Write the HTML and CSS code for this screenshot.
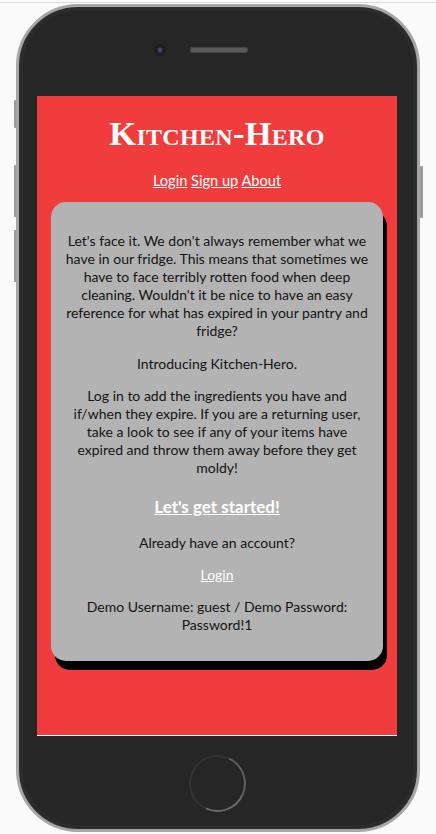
FILE: index.html
```html
<!DOCTYPE html>
<html lang="en">
<head>
<meta charset="utf-8">
<title>Kitchen-Hero</title>
<link rel="stylesheet" href="styles.css">
</head>
<body>
<div class="stage">
  <div class="phone">
    <span class="side-btn left b1"></span>
    <span class="side-btn left b2"></span>
    <span class="side-btn left b3"></span>
    <span class="side-btn right b4"></span>
    <div class="phone-top">
      <span class="camera"></span>
      <span class="speaker"></span>
      <span class="spacer"></span>
    </div>
    <div class="screen">
      <header class="site-header">
        <h1 class="brand">Kitchen-Hero</h1>
        <nav class="nav">
          <a href="#">Login</a> <a href="#">Sign up</a> <a href="#">About</a>
        </nav>
      </header>
      <main class="card">
        <p>Let's face it. We don't always remember what we have in our fridge. This means that sometimes we have to face terribly rotten food when deep cleaning. Wouldn't it be nice to have an easy reference for what has expired in your pantry and fridge?</p>
        <p>Introducing Kitchen-Hero.</p>
        <p>Log in to add the ingredients you have and if/when they expire. If you are a returning user, take a look to see if any of your items have expired and throw them away before they get moldy!</p>
        <h3 class="cta"><a href="#">Let's get started!</a></h3>
        <p>Already have an account?</p>
        <p><a href="#">Login</a></p>
        <p>Demo Username: guest / Demo Password: Password!1</p>
      </main>
    </div>
    <div class="phone-bottom">
      <span class="home-btn"></span>
    </div>
  </div>
</div>
</body>
</html>
```

FILE: styles.css
```css
* { box-sizing: border-box; }

html, body {
  margin: 0;
  padding: 0;
}

body {
  background: #fafafa;
  width: 436px;
  height: 834px;
  overflow: hidden;
  font-family: "Lato", "Noto Sans", sans-serif;
}

.stage {
  border-top: 1px solid #dcdcdc;
  margin-top: 2px;
  padding: 1px 0 0 16px;
}

.phone {
  position: relative;
  width: 404px;
  height: 828px;
  border-radius: 62px;
  border: 3px solid #a6a6a6;
  background: #262626;
  box-shadow: inset 0 0 0 4px #2c2c2c, inset 0 0 0 1px #555;
  display: flex;
  flex-direction: column;
  align-items: center;
}

.side-btn {
  position: absolute;
  width: 3px;
  background: #9c9c9c;
  border-radius: 1px;
  z-index: -1;
}
.side-btn.left { left: -5px; }
.side-btn.right { right: -6px; }
.b1 { top: 93px; height: 28px; }
.b2 { top: 158px; height: 52px; }
.b3 { top: 223px; height: 52px; }
.b4 { top: 159px; height: 52px; }

.phone-top {
  height: 89px;
  width: 100%;
  display: flex;
  justify-content: center;
  align-items: flex-start;
  padding-top: 38px;
  gap: 25px;
  padding-left: 2px;
}

.camera {
  width: 10px;
  height: 10px;
  border-radius: 50%;
  background: radial-gradient(circle at 50% 50%, #4a3f6a 0 2px, #1c1c22 3px);
  box-shadow: 0 0 0 1px #1f1f1f;
}

.speaker {
  margin-top: 2px;
  width: 58px;
  height: 6px;
  border-radius: 3px;
  background: #5a5a5a;
  box-shadow: inset 0 0 0 1px #444;
}

.spacer { width: 10px; }

.screen {
  width: 360px;
  height: 640px;
  background: #f03c3c;
  border-bottom: 1px solid #ffffff;
  display: flex;
  flex-direction: column;
  align-items: center;
  margin-left: -2px;
}

.site-header {
  text-align: center;
  padding-top: 17px;
}

.brand {
  margin: 0;
  font-family: "Liberation Serif", "Times New Roman", serif;
  font-variant: small-caps;
  font-weight: bold;
  font-size: 34.5px;
  line-height: 40px;
  color: #ffffff;
  letter-spacing: 0.3px;
}

.nav {
  margin-top: 18px;
  font-size: 14.6px;
  line-height: 20px;
}

.nav a, .card a {
  color: #ffffff;
  text-decoration: underline;
}

.card {
  margin-top: 11px;
  width: 332px;
  background: #b3b3b3;
  border-radius: 15px;
  box-shadow: 4px 9px 0 #000000;
  padding: 16px 13px 12px;
  text-align: center;
  color: #141414;
  font-size: 14px;
  line-height: 18.1px;
}

.card p {
  margin: 14px 0;
}

.cta {
  margin: 20px 0 17px;
  font-size: 17px;
  line-height: 20px;
  font-weight: bold;
}

.phone-bottom {
  flex: 1;
  display: flex;
  justify-content: center;
  padding-top: 19px;
  margin-left: -2px;
}

.home-btn {
  width: 57px;
  height: 57px;
  border-radius: 50%;
  border: 2px solid;
  border-color: #333333 #5e5e5e #6a6a6a #333333;
  transform: rotate(-20deg);
}
```
